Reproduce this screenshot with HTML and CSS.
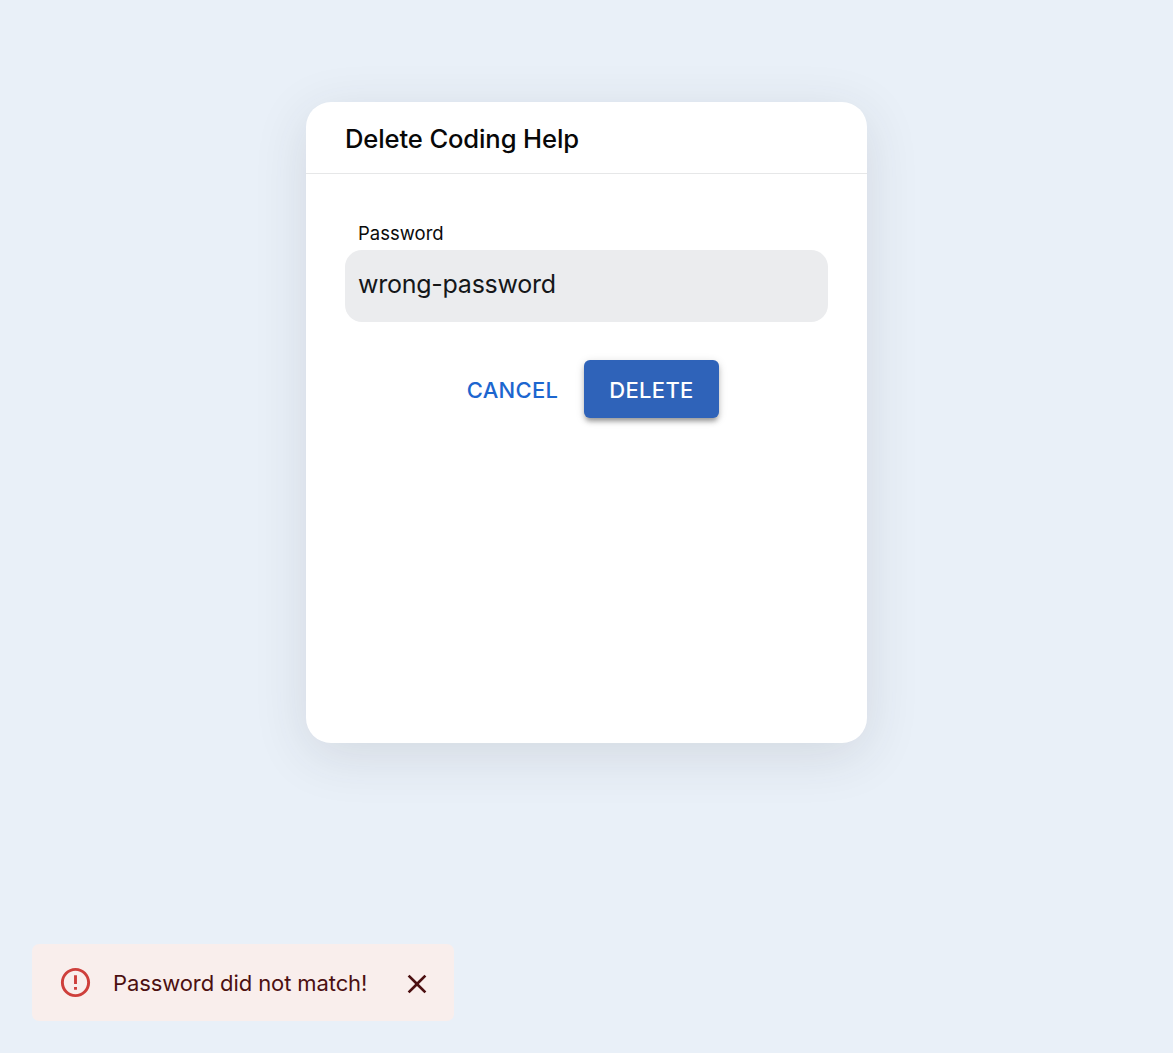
FILE: index.html
```html
<!DOCTYPE html>
<html lang="en">
<head>
<meta charset="utf-8">
<title>Delete Coding Help</title>
<link rel="stylesheet" href="styles.css">
</head>
<body>
<main class="page">
  <section class="dialog">
    <header class="dialog-header"><h1 class="dialog-title">Delete Coding Help</h1></header>
    <form class="dialog-body">
      <label class="field-label" for="password">Password</label>
      <input class="field-input" id="password" type="text" value="wrong-password">
      <div class="actions">
        <button class="button button-text" type="button"><span>CANCEL</span></button>
        <button class="button button-filled" type="button"><span>DELETE</span></button>
      </div>
    </form>
  </section>
  <div class="alert" role="alert">
    <svg class="alert-icon" viewBox="0 0 24 24"><path d="M11 15h2v2h-2zm0-8h2v6h-2zm.99-5C6.47 2 2 6.48 2 12s4.47 10 9.99 10C17.52 22 22 17.52 22 12S17.52 2 11.99 2zM12 20c-4.42 0-8-3.58-8-8s3.58-8 8-8 8 3.58 8 8-3.58 8-8 8z"/></svg>
    <span class="alert-text">Password did not match!</span>
    <button class="alert-close" type="button" aria-label="Close"><svg viewBox="0 0 24 24"><path d="M19 6.41 17.59 5 12 10.59 6.41 5 5 6.41 10.59 12 5 17.59 6.41 19 12 13.41 17.59 19 19 17.59 13.41 12z"/></svg></button>
  </div>
</main>
</body>
</html>
```
FILE: styles.css
```css
* { box-sizing: border-box; }
body { margin: 0; background: #e9f0f8; font-family: Inter, "Liberation Sans", sans-serif; }
.page { height: 1053px; padding: 102px 0 32px 32px; display: flex; flex-direction: column; justify-content: space-between; align-items: flex-start; overflow: hidden; }
.dialog { width: 561px; height: 641px; margin-left: 274px; background: #fff; border-radius: 25px; box-shadow: 0 12px 54px rgba(50, 50, 60, .12); }
.dialog-header { height: 72px; padding: 2px 39px 0; display: flex; align-items: center; border-bottom: 1px solid #e6e7e8; }
.dialog-title { margin: 0; font-size: 25.6px; line-height: 32px; font-weight: 540; letter-spacing: -.13px; color: #080808; white-space: nowrap; }
.dialog-body { padding: 46px 39px 0; display: flex; flex-direction: column; }
.field-label { padding-left: 13px; height: 30px; font-size: 18.5px; line-height: 27px; color: #0b0b0b; }
.field-input { width: 483px; height: 72px; padding: 0 13px 4px; border: 0; border-radius: 17px; outline: 0; background: #ebecee; color: #151719; font: 400 25px Inter, sans-serif; letter-spacing: -.25px; }
.actions { margin: 38px 0 0 109px; display: flex; }
.button { height: 58px; padding: 2px 0 0; border: 0; border-radius: 6px; font: 500 22px Inter, sans-serif; letter-spacing: .3px; }
.button-text { width: 117px; margin-right: 13px; background: none; color: #1c66cf; }
.button-filled { width: 135px; background: #2f63b9; color: #fff; box-shadow: 0 5px 4px -3px rgba(0,0,0,.2), 0 4px 5px rgba(0,0,0,.18), 0 2px 10px rgba(0,0,0,.14); }
.alert { width: 422px; height: 77px; padding-left: 26px; display: flex; align-items: center; border-radius: 7px; background: #f9eeec; color: #4c1011; }
.alert-icon { width: 35px; height: 35px; fill: #ce3f3b; }
.alert-text { width: 254px; margin-left: 20px; font-size: 22px; line-height: 32px; letter-spacing: -.1px; white-space: nowrap; }
.alert-close { width: 32px; height: 32px; margin: 2px 0 0 34px; padding: 0; border: 0; background: none; }
.alert-close svg { display: block; width: 32px; height: 32px; fill: #4c1011; }
```
